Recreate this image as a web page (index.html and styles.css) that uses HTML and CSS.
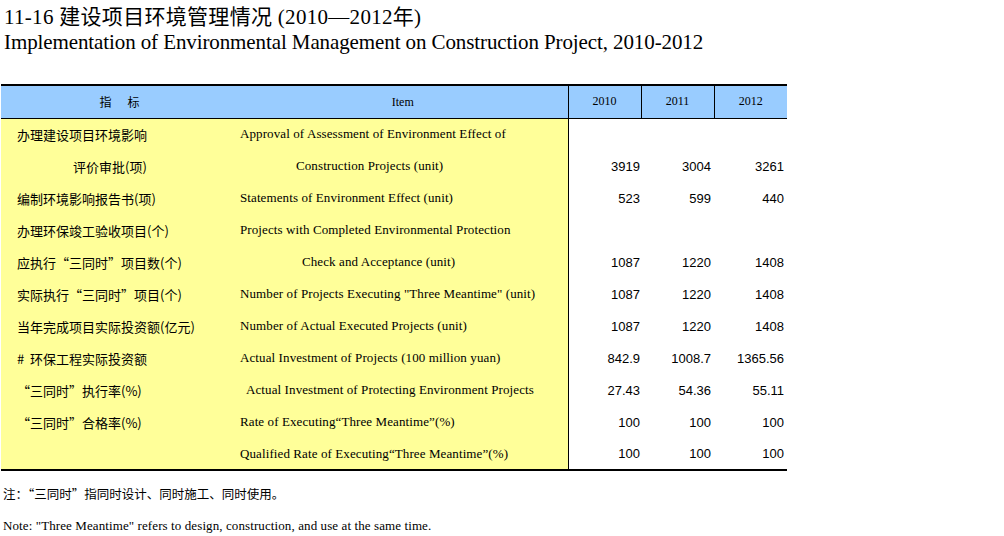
FILE: index.html
```html
<!DOCTYPE html>
<html lang="zh">
<head>
<meta charset="utf-8">
<title>11-16 建设项目环境管理情况</title>
<link rel="stylesheet" href="styles.css">
</head>
<body>
<div class="page">
  <h1 class="title-cn">11-16 建设项目环境管理情况 (2010—2012年)</h1>
  <h2 class="title-en">Implementation of Environmental Management on Construction Project, 2010-2012</h2>
  <table class="data">
    <colgroup>
      <col class="c-cn"><col class="c-en"><col class="c-num"><col class="c-num"><col class="c-num">
    </colgroup>
    <thead>
      <tr>
        <th class="h-cn">指<span class="gap"></span>标</th>
        <th class="h-en">Item</th>
        <th class="h-yr first">2010</th>
        <th class="h-yr">2011</th>
        <th class="h-yr">2012</th>
      </tr>
    </thead>
    <tbody>
      <tr><td class="cn">办理建设项目环境影响</td><td class="en">Approval of Assessment of Environment Effect of</td><td class="num first"></td><td class="num"></td><td class="num"></td></tr>
      <tr><td class="cn ind-l">评价审批(项)</td><td class="en ind-a">Construction Projects (unit)</td><td class="num first">3919</td><td class="num">3004</td><td class="num">3261</td></tr>
      <tr><td class="cn">编制环境影响报告书(项)</td><td class="en">Statements of Environment Effect (unit)</td><td class="num first">523</td><td class="num">599</td><td class="num">440</td></tr>
      <tr><td class="cn">办理环保竣工验收项目(个)</td><td class="en">Projects with Completed Environmental Protection</td><td class="num first"></td><td class="num"></td><td class="num"></td></tr>
      <tr><td class="cn">应执行“三同时”项目数(个)</td><td class="en ind-b">Check and Acceptance (unit)</td><td class="num first">1087</td><td class="num">1220</td><td class="num">1408</td></tr>
      <tr><td class="cn">实际执行“三同时”项目(个)</td><td class="en">Number of Projects Executing "Three Meantime" (unit)</td><td class="num first">1087</td><td class="num">1220</td><td class="num">1408</td></tr>
      <tr><td class="cn">当年完成项目实际投资额(亿元)</td><td class="en">Number of Actual Executed Projects (unit)</td><td class="num first">1087</td><td class="num">1220</td><td class="num">1408</td></tr>
      <tr><td class="cn">#&nbsp;&nbsp;环保工程实际投资额</td><td class="en">Actual Investment of Projects (100 million yuan)</td><td class="num first">842.9</td><td class="num">1008.7</td><td class="num">1365.56</td></tr>
      <tr><td class="cn">“三同时”执行率(%)</td><td class="en ind-c">Actual Investment of Protecting Environment Projects</td><td class="num first">27.43</td><td class="num">54.36</td><td class="num">55.11</td></tr>
      <tr><td class="cn">“三同时”合格率(%)</td><td class="en">Rate of Executing“Three Meantime”(%)</td><td class="num first">100</td><td class="num">100</td><td class="num">100</td></tr>
      <tr><td class="cn"></td><td class="en">Qualified Rate of Executing“Three Meantime”(%)</td><td class="num first">100</td><td class="num">100</td><td class="num">100</td></tr>
    </tbody>
  </table>
  <p class="note-cn">注：“三同时”指同时设计、同时施工、同时使用。</p>
  <p class="note-en">Note: "Three Meantime" refers to design, construction, and use at the same time.</p>
</div>
</body>
</html>
```

FILE: styles.css
```css
* { box-sizing: border-box; }
html, body { margin: 0; padding: 0; background: #fff; }
body {
  font-family: "Liberation Serif", "Noto Sans CJK SC", serif;
  color: #000;
}
.page {
  padding: 4px 0 0 1px;
}
.title-cn {
  margin: 0 0 0 3px;
  font-weight: normal;
  font-size: 21px;
  line-height: 26px;
  letter-spacing: 0.3px;
  font-family: "Liberation Serif", "Noto Sans CJK SC", serif;
}
.title-en {
  margin: 0 0 0 3px;
  font-weight: normal;
  font-size: 21px;
  line-height: 24px;
  letter-spacing: -0.1px;
}
.data {
  margin-top: 30px;
  border-collapse: collapse;
  table-layout: fixed;
  width: 786px;
  border-top: 2px solid #000;
  border-bottom: 2px solid #000;
}
.c-cn { width: 237px; }
.c-en { width: 330px; }
.c-num { width: 73px; }
.data th {
  background: #99ccff;
  font-weight: normal;
  height: 33px;
  font-size: 12px;
  border-bottom: 1px solid #000;
  padding: 0;
  text-align: center;
}
.data th.h-cn { font-family: "Noto Sans CJK SC", sans-serif; font-size: 12px; }
.data th .gap { display: inline-block; width: 16px; }
.data th.h-en { padding-top: 2px; }
.data th.h-yr { border-left: 1px solid #000; }
.data td {
  height: 32px;
  padding: 0;
  vertical-align: middle;
  white-space: nowrap;
}
.data td.cn, .data td.en { background: #ffff99; }
.data td.cn {
  font-family: "Noto Sans CJK SC", sans-serif;
  font-size: 13px;
  padding-left: 16px;
}
.data td.en {
  font-size: 13px;
  padding-left: 2px;
  letter-spacing: 0.1px;
}
.data td.ind-l { padding-left: 72px; }
.data td.ind-a { padding-left: 58px; }
.data td.ind-b { padding-left: 64px; }
.data td.ind-c { padding-left: 8px; }
.data td.num {
  font-family: "Liberation Sans", Arial, sans-serif;
  font-size: 13px;
  text-align: right;
  padding-right: 3px;
  background: #fff;
}
.data td.num.first { border-left: 1px solid #000; padding-right: 1px; }
.note-cn {
  margin: 13px 0 0 2px;
  font-family: "Noto Sans CJK SC", sans-serif;
  font-size: 12.5px;
  line-height: 20px;
}
.note-en {
  margin: 14px 0 0 2px;
  font-size: 13px;
  line-height: 16px;
  letter-spacing: 0.1px;
}
```
